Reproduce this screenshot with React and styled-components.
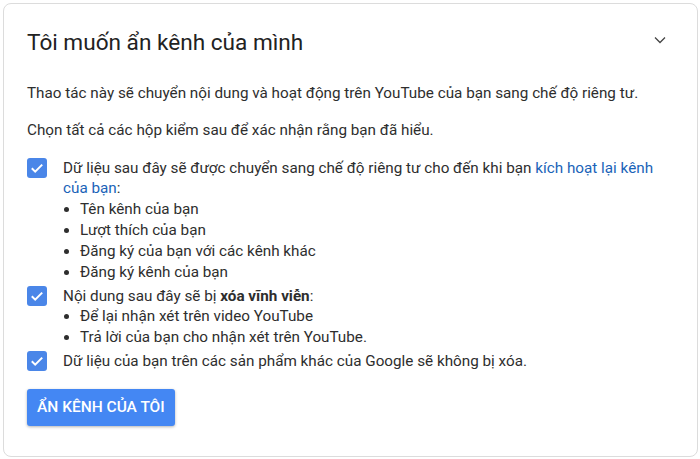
import React from "react";
import styled, { createGlobalStyle } from "styled-components";

const GlobalStyle = createGlobalStyle`
  html, body {
    margin: 0;
    padding: 0;
    background: #ffffff;
    font-family: Roboto, "Noto Sans", Arial, sans-serif;
  }
`;

const getSections = () => [
  {
    text: (
      <>
        Dữ liệu sau đây sẽ được chuyển sang chế độ riêng tư cho đến khi bạn{" "}
        <Link href="#">kích hoạt lại kênh của bạn</Link>:
      </>
    ),
    items: [
      "Tên kênh của bạn",
      "Lượt thích của bạn",
      "Đăng ký của bạn với các kênh khác",
      "Đăng ký kênh của bạn",
    ],
  },
  {
    text: (
      <>
        Nội dung sau đây sẽ bị <b>xóa vĩnh viễn</b>:
      </>
    ),
    items: [
      "Để lại nhận xét trên video YouTube",
      "Trả lời của bạn cho nhận xét trên YouTube.",
    ],
  },
  {
    text: "Dữ liệu của bạn trên các sản phẩm khác của Google sẽ không bị xóa.",
    items: [],
  },
];

const App = () => {
  const sections = getSections();
  return (
    <>
      <GlobalStyle />
      <Card>
        <Header>
          <Title>Tôi muốn ẩn kênh của mình</Title>
          <Chevron viewBox="0 0 24 24">
            <path d="M6 9l6 6 6-6" />
          </Chevron>
        </Header>
        <Para>
          Thao tác này sẽ chuyển nội dung và hoạt động trên YouTube của bạn sang
          chế độ riêng tư.
        </Para>
        <Para>Chọn tất cả các hộp kiểm sau để xác nhận rằng bạn đã hiểu.</Para>
        <Checks>
          {sections.map((s, i) => (
            <CheckRow key={i}>
              <Box>
                <svg viewBox="0 0 20 20" width="20" height="20">
                  <path d="M4.8 10.2l3.4 3.4 7-7" />
                </svg>
              </Box>
              <CheckBody>
                <CheckText>{s.text}</CheckText>
                {s.items.length > 0 && (
                  <Bullets>
                    {s.items.map((it) => (
                      <li key={it}>{it}</li>
                    ))}
                  </Bullets>
                )}
              </CheckBody>
            </CheckRow>
          ))}
        </Checks>
        <Button>ẨN KÊNH CỦA TÔI</Button>
      </Card>
    </>
  );
};

const Card = styled.div`
  box-sizing: border-box;
  margin: 3px;
  width: 695px;
  height: 454px;
  border: 1px solid #dcdcdc;
  border-radius: 8px;
  padding: 25px 24px 0 23px;
  color: #2e2e2e;
`;
const Header = styled.div`
  display: flex;
  justify-content: space-between;
  align-items: center;
`;
const Title = styled.h1`
  margin: 0;
  font-size: 22.6px;
  font-weight: 400;
  line-height: 28px;
  color: #222;
`;
const Chevron = styled.svg`
  width: 20px;
  height: 20px;
  margin-right: 3px;
  margin-top: -6px;
  fill: none;
  stroke: #444;
  stroke-width: 1.5;
`;
const Para = styled.p`
  margin: 0;
  margin-top: 19px;
  font-size: 15.25px;
  line-height: 18px;
  &:first-of-type {
    margin-top: 27px;
  }
`;
const Checks = styled.div`
  margin-top: 18.6px;
  display: flex;
  flex-direction: column;
  gap: 3.2px;
`;
const CheckRow = styled.div`
  display: flex;
  gap: 16px;
  align-items: flex-start;
`;
const Box = styled.div`
  flex: none;
  width: 20px;
  height: 20px;
  border-radius: 3px;
  background: #4a86e8;
  svg {
    display: block;
    fill: none;
    stroke: #fff;
    stroke-width: 2;
  }
`;
const CheckBody = styled.div`
  flex: 1;
`;
const CheckText = styled.div`
  max-width: 600px;
  font-size: 15.25px;
  line-height: 20.8px;
  b {
    font-weight: 700;
  }
`;
const Link = styled.a`
  color: #1a63b8;
  text-decoration: none;
`;
const Bullets = styled.ul`
  margin: 0;
  padding-left: 17px;
  font-size: 15.25px;
  line-height: 20.8px;
`;
const Button = styled.button`
  margin-top: 17px;
  height: 37px;
  padding: 0 10px;
  border: none;
  border-radius: 3px;
  background: #4487f3;
  color: #fff;
  font-family: Roboto, Arial, sans-serif;
  font-size: 15.5px;
  font-weight: 500;
  box-shadow: 0 1px 3px rgba(0, 0, 0, 0.3);
`;

export default App;
